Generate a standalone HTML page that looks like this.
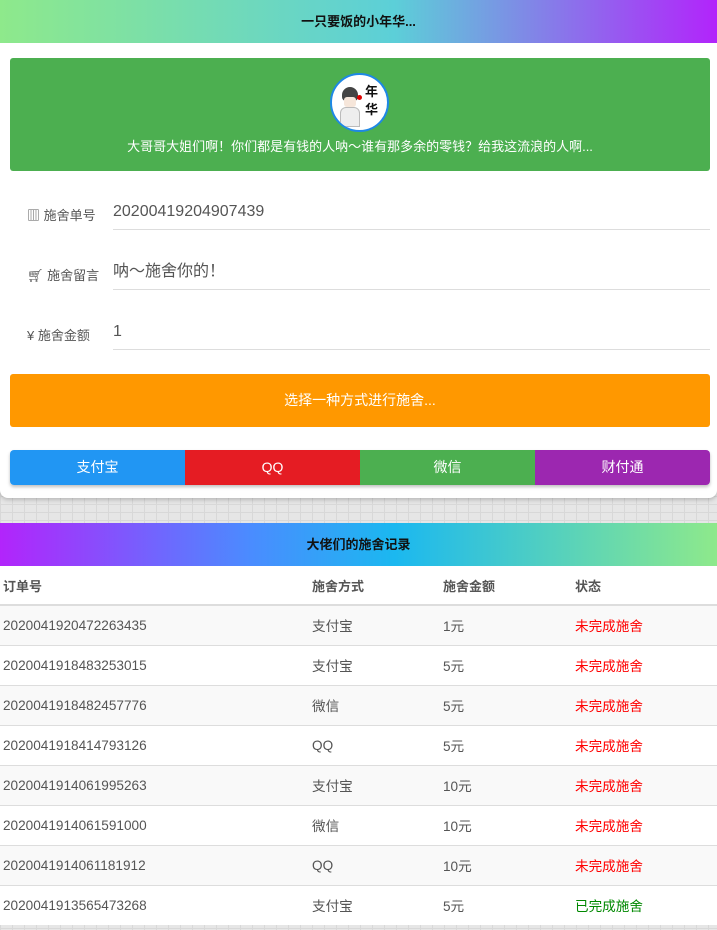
<!DOCTYPE html>
<html><head><meta charset="utf-8"><style>
*{box-sizing:border-box;margin:0;padding:0}
body{width:717px;height:930px;overflow:hidden;font-family:"Liberation Sans","Noto Sans CJK SC",sans-serif;background:#e6e6e6;
background-image:linear-gradient(#d8d8d8 1px,transparent 1px),linear-gradient(90deg,#d8d8d8 1px,transparent 1px);background-size:12px 8px;}
.card{position:absolute;left:0;top:0;width:717px;height:498px;background:#fff;border-radius:0 0 8px 8px;box-shadow:0 2px 4px rgba(0,0,0,.2)}
.hd{position:absolute;left:0;width:717px;height:43px;line-height:43px;text-align:center;font-size:13px;font-weight:bold;color:#111}
.h1{top:0;background:linear-gradient(90deg,#8ee98b,#5ccfd8 55%,#b224fb)}
.green{position:absolute;left:10px;top:58px;width:700px;height:113px;background:#4caf50;border-radius:3px;text-align:center;color:#fff;font-size:13px}
.av{position:absolute;left:320px;top:15px;width:59px;height:59px;border-radius:50%;border:2px solid #1e88e5;background:#fff;overflow:hidden}
.row{position:absolute;left:0;width:717px;height:40px}
.lab{position:absolute;left:27px;top:14px;font-size:13px;color:#555}
.val{position:absolute;left:113px;width:597px;height:34px;border-bottom:1px solid #ddd;font-size:16px;color:#555;line-height:32px}
.or{position:absolute;left:10px;top:374px;width:700px;height:53px;background:#ff9800;border-radius:3px;color:#fff;text-align:center;line-height:53px;font-size:14px}
.pay{position:absolute;left:10px;top:450px;width:700px;height:35px;display:flex;border-radius:4px;overflow:hidden;box-shadow:0 2px 3px rgba(0,0,0,.25)}
.pay div{flex:1;color:#fff;text-align:center;line-height:35px;font-size:14px}
.h2{top:523px;background:linear-gradient(90deg,#b224fb,#4a8cff 35%,#1bb8f0 55%,#8ee98b)}
table{position:absolute;left:0;top:566px;width:717px;border-collapse:collapse;background:#fff;font-size:13.6px;color:#555}
td,th{height:40px;padding:0 3px;text-align:left;border-top:1px solid #ddd}
th{font-weight:bold;font-size:13px;border-bottom:2px solid #ddd;border-top:none;height:39px}
tbody tr:nth-child(odd){background:#f9f9f9}
.r{color:#f00}.g{color:#080}
</style></head><body>
<div class="card">
<div class="hd h1">一只要饭的小年华...</div>
<div class="green">
<div class="av">
<div style="position:absolute;left:10px;top:12px;width:16px;height:14px;border-radius:8px 8px 4px 4px;background:#444"></div>
<div style="position:absolute;left:12px;top:22px;width:12px;height:10px;background:#f6e6da;border-radius:3px"></div>
<div style="position:absolute;left:8px;top:32px;width:20px;height:20px;background:#eee;border-radius:6px 6px 0 0;border:1px solid #bbb"></div>
<div style="position:absolute;left:25px;top:20px;width:5px;height:5px;background:#d00;border-radius:50%"></div>
<div style="position:absolute;left:33px;top:8px;font-size:13px;color:#111;line-height:18px;font-weight:bold">年<br>华</div>
</div>
<div style="position:absolute;left:0;top:78px;width:700px;">大哥哥大姐们啊！你们都是有钱的人呐～谁有那多余的零钱？给我这流浪的人啊...</div>
</div>
<div class="row" style="top:199px"><div class="lab" style="top:6px">▥ 施舍单号</div><div class="val" style="top:-3px">20200419204907439</div></div>
<div class="row" style="top:259px"><div class="lab" style="top:6px">🛒︎ 施舍留言</div><div class="val" style="top:-3px">呐～施舍你的！</div></div>
<div class="row" style="top:319px"><div class="lab" style="top:6px">¥ 施舍金额</div><div class="val" style="top:-3px">1</div></div>
<div class="or">选择一种方式进行施舍...</div>
<div class="pay"><div style="background:#2196f3">支付宝</div><div style="background:#e51c23">QQ</div><div style="background:#4caf50">微信</div><div style="background:#9c27b0">财付通</div></div>
</div>
<div class="hd h2">大佬们的施舍记录</div>
<table>
<colgroup><col style="width:309px"><col style="width:131px"><col style="width:132px"><col></colgroup>
<thead><tr><th>订单号</th><th>施舍方式</th><th>施舍金额</th><th>状态</th></tr></thead>
<tbody>
<tr><td>2020041920472263435</td><td>支付宝</td><td>1元</td><td class="r">未完成施舍</td></tr>
<tr><td>2020041918483253015</td><td>支付宝</td><td>5元</td><td class="r">未完成施舍</td></tr>
<tr><td>2020041918482457776</td><td>微信</td><td>5元</td><td class="r">未完成施舍</td></tr>
<tr><td>2020041918414793126</td><td>QQ</td><td>5元</td><td class="r">未完成施舍</td></tr>
<tr><td>2020041914061995263</td><td>支付宝</td><td>10元</td><td class="r">未完成施舍</td></tr>
<tr><td>2020041914061591000</td><td>微信</td><td>10元</td><td class="r">未完成施舍</td></tr>
<tr><td>2020041914061181912</td><td>QQ</td><td>10元</td><td class="r">未完成施舍</td></tr>
<tr><td>2020041913565473268</td><td>支付宝</td><td>5元</td><td class="g">已完成施舍</td></tr>
</tbody></table>
</body></html>
